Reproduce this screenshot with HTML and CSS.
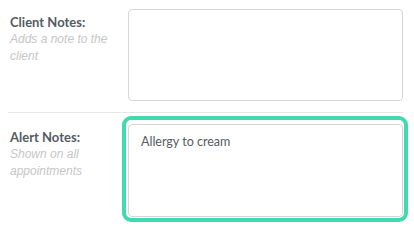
FILE: index.html
```html
<!DOCTYPE html>
<html>
<head>
<meta charset="utf-8">
<link rel="stylesheet" href="styles.css">
</head>
<body>
<div class="form">
  <div class="row row-first">
    <div class="label-col">
      <div class="label">Client Notes:</div>
      <div class="hint">Adds a note to the client</div>
    </div>
    <div class="field">
      <textarea class="box box-client"></textarea>
    </div>
  </div>
  <div class="row row-second">
    <div class="label-col">
      <div class="label label-focused">Alert Notes:</div>
      <div class="hint">Shown on all appointments</div>
    </div>
    <div class="field">
      <div class="focus-ring">
        <textarea class="box box-alert">Allergy to cream</textarea>
      </div>
    </div>
  </div>
</div>
</body>
</html>
```

FILE: styles.css
```css
html, body {
  margin: 0;
  padding: 0;
  background: #ffffff;
}

.form {
  padding: 9px 6px 0 8px;
  font-family: Lato, "Liberation Sans", sans-serif;
}

.row {
  display: grid;
  align-items: start;
}

.row-first {
  grid-template-columns: 120px 1fr;
  margin-right: 5px;
  padding-bottom: 11px;
  border-bottom: 1px solid #e6e7e9;
}

.row-second {
  grid-template-columns: 114px 1fr;
  padding-top: 3px;
}

.label-col {
  padding-left: 2px;
}

.label {
  padding-top: 4px;
  font-size: 13px;
  line-height: 18px;
  font-weight: 700;
  color: #545b62;
}

.label-focused {
  padding-top: 12px;
}

.hint {
  width: 100px;
  font-family: "Liberation Sans", Arial, sans-serif;
  font-style: italic;
  font-size: 12px;
  line-height: 17px;
  color: #c6c6c6;
}

.box {
  display: block;
  box-sizing: border-box;
  width: 100%;
  margin: 0;
  border: 1px solid #d3d6db;
  border-radius: 4px;
  padding: 7px 12px;
  resize: none;
  outline: none;
  font-family: Lato, "Liberation Sans", sans-serif;
  font-size: 12.5px;
  line-height: 20px;
  color: #545b62;
  background: #ffffff;
}

.box-client {
  height: 92px;
}

.box-alert {
  height: 93px;
}

.focus-ring {
  padding: 4px 1px 1px 2px;
  border: 4px solid #3fdaad;
  border-radius: 9px;
}
```
